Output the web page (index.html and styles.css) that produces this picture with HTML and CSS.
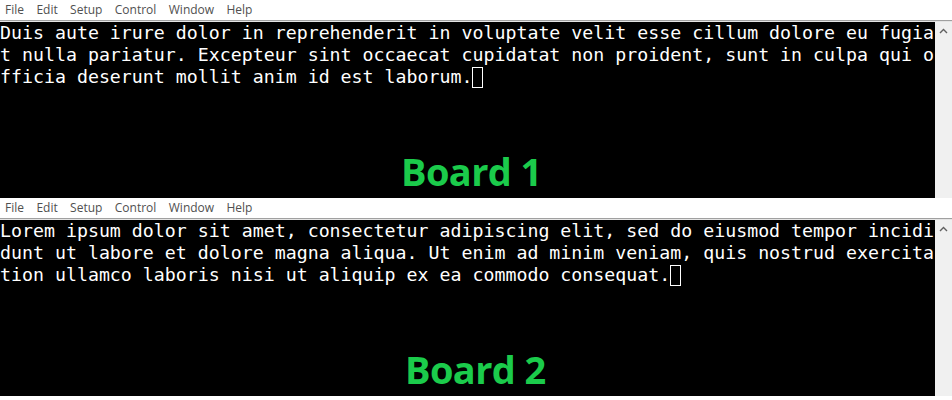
FILE: index.html
```html
<!DOCTYPE html>
<html>
<head>
<meta charset="utf-8">
<link rel="stylesheet" href="styles.css">
</head>
<body>
<section class="board">
  <nav class="menu">
    <span class="mi">File</span><span class="mi">Edit</span><span class="mi">Setup</span><span class="mi">Control</span><span class="mi">Window</span><span class="mi">Help</span>
  </nav>
  <div class="term">
    <div class="screen">
      <div class="line">Duis aute irure dolor in reprehenderit in voluptate velit esse cillum dolore eu fugia</div>
      <div class="line">t nulla pariatur. Excepteur sint occaecat cupidatat non proident, sunt in culpa qui o</div>
      <div class="line">fficia deserunt mollit anim id est laborum.<span class="cursor"></span></div>
      <div class="label l1">Board 1</div>
    </div>
    <div class="scroll"><svg class="up" width="17" height="17" viewBox="0 0 17 17"><path d="M5 10 L8.5 6.5 L12 10" fill="none" stroke="#606060" stroke-width="1.4"/></svg></div>
  </div>
</section>
<section class="board">
  <nav class="menu">
    <span class="mi">File</span><span class="mi">Edit</span><span class="mi">Setup</span><span class="mi">Control</span><span class="mi">Window</span><span class="mi">Help</span>
  </nav>
  <div class="term">
    <div class="screen">
      <div class="line">Lorem ipsum dolor sit amet, consectetur adipiscing elit, sed do eiusmod tempor incidi</div>
      <div class="line">dunt ut labore et dolore magna aliqua. Ut enim ad minim veniam, quis nostrud exercita</div>
      <div class="line">tion ullamco laboris nisi ut aliquip ex ea commodo consequat.<span class="cursor"></span></div>
      <div class="label l2">Board 2</div>
    </div>
    <div class="scroll"><svg class="up" width="17" height="17" viewBox="0 0 17 17"><path d="M5 10 L8.5 6.5 L12 10" fill="none" stroke="#606060" stroke-width="1.4"/></svg></div>
  </div>
</section>
</body>
</html>
```

FILE: styles.css
```css
html, body {
  margin: 0;
  padding: 0;
  background: #ffffff;
  overflow: hidden;
}
body {
  width: 952px;
  height: 400px;
}
.board {
  display: flex;
  flex-direction: column;
  height: 198px;
}
.menu {
  display: flex;
  align-items: center;
  box-sizing: border-box;
  height: 21px;
  padding-left: 5px;
  background: #ffffff;
  border-bottom: 1px solid #a0a0a0;
  box-shadow: 0 1px 0 #e4e4e4;
  margin-bottom: 1px;
  font-family: "Open Sans", "Noto Sans", sans-serif;
  font-size: 12px;
  color: #505050;
}
.mi {
  margin-right: 12.4px;
  line-height: 18px;
}
.term {
  display: flex;
  flex: 1;
  min-height: 0;
  background: #000000;
}
.screen {
  flex: 1;
  display: flex;
  flex-direction: column;
  font-family: "DejaVu Sans Mono", monospace;
  font-size: 18.25px;
  line-height: 22px;
  color: #ffffff;
  white-space: pre;
  overflow: hidden;
}
.cursor {
  display: inline-block;
  width: 9px;
  height: 19px;
  border: 1px solid #ffffff;
  vertical-align: top;
  margin-top: 1px;
}
.label {
  margin-top: auto;
  font-family: "Open Sans", "Noto Sans", sans-serif;
  font-weight: 700;
  font-size: 38px;
  letter-spacing: -0.6px;
  line-height: 52px;
  color: #1bcb4b;
  white-space: nowrap;
  padding-bottom: 1px;
}
.l1 { padding-left: 401px; }
.l2 { padding-left: 405px; }
.scroll {
  width: 17px;
  background: #f0f0f0;
  flex: none;
}
.up {
  display: block;
  margin-top: 1px;
}
```
